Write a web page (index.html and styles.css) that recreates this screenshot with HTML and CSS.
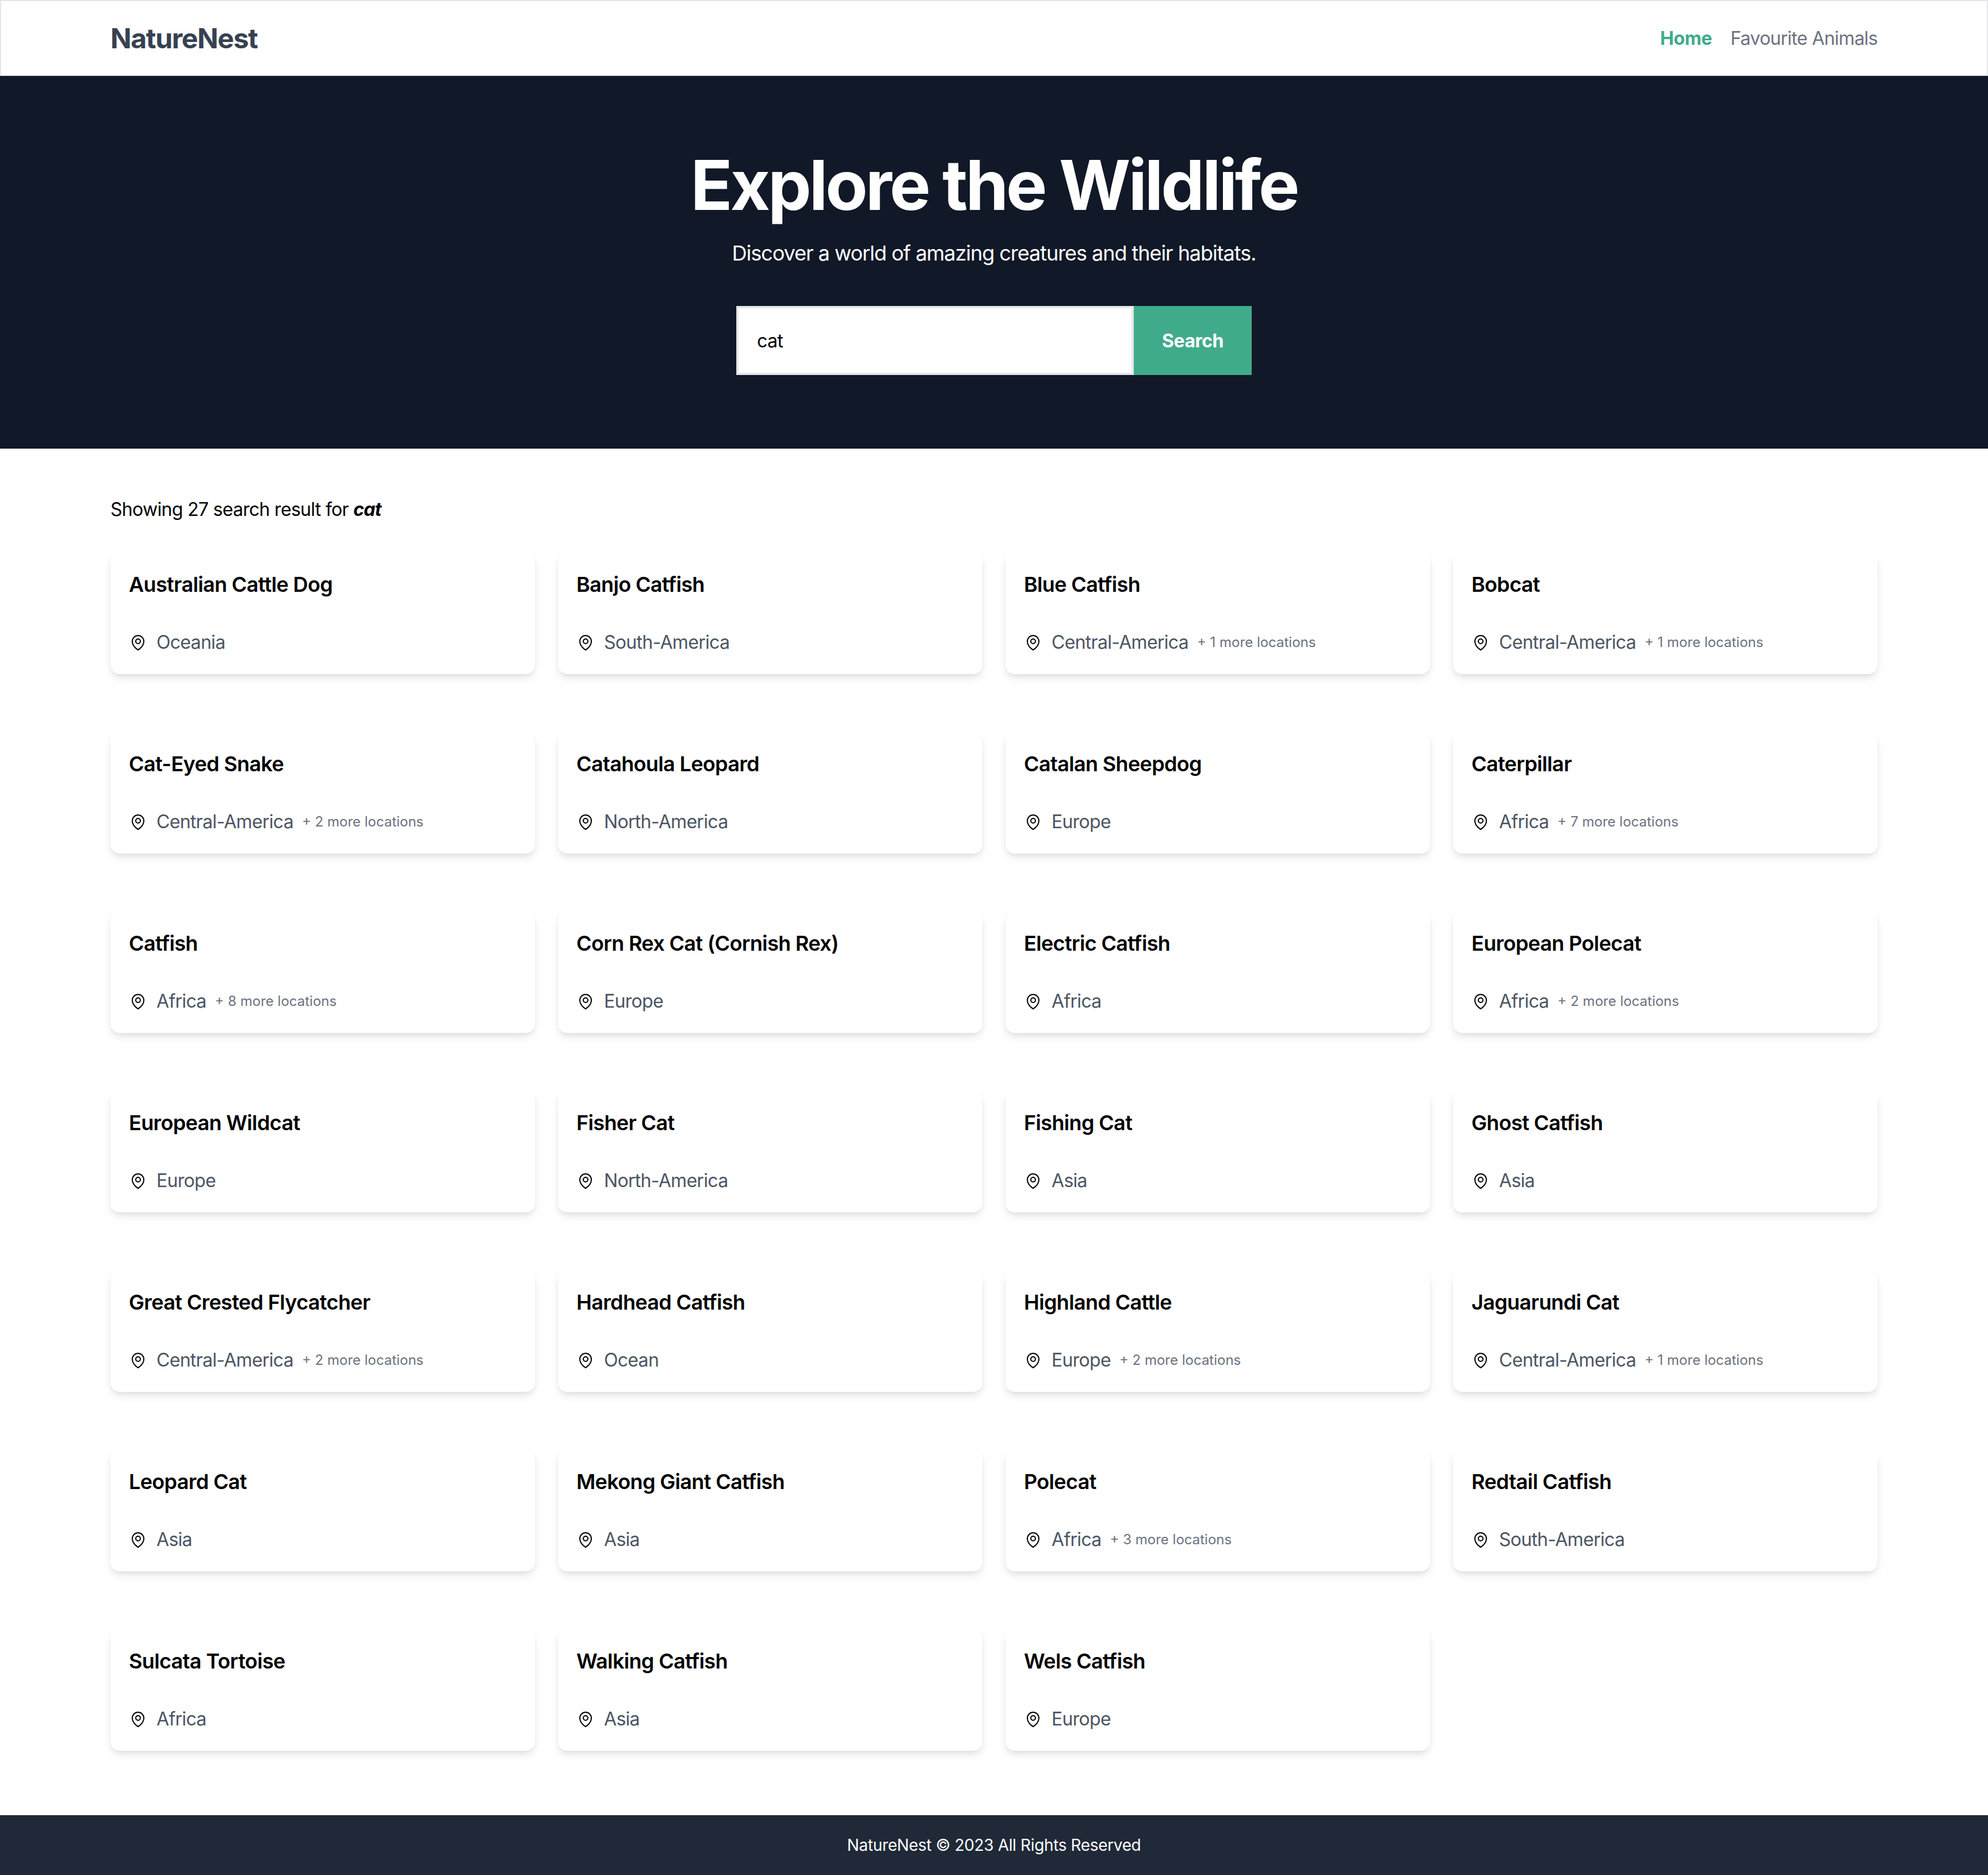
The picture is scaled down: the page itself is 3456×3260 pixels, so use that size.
FILE: index.html
```html
<!DOCTYPE html>
<html lang="en">
<head>
  <meta charset="UTF-8">
  <title>NatureNest</title>
  <meta name="viewport" content="width=device-width, initial-scale=1.0">
  <link rel="stylesheet" href="styles.css">
</head>
<body>
  <svg class="sprite" aria-hidden="true">
    <symbol id="pin" viewBox="0 0 24 24">
      <path d="M15 10.5a3 3 0 1 1-6 0 3 3 0 0 1 6 0z"/>
      <path d="M19.5 10.5c0 7.142-7.5 11.25-7.5 11.25S4.5 17.642 4.5 10.5a7.5 7.5 0 1 1 15 0z"/>
    </symbol>
  </svg>

  <header class="site-header">
    <div class="container header-row">
      <a class="logo" href="#">NatureNest</a>
      <nav class="nav">
        <a class="active" href="#">Home</a>
        <a href="#">Favourite Animals</a>
      </nav>
    </div>
  </header>

  <section class="hero">
    <h1>Explore the Wildlife</h1>
    <p>Discover a world of amazing creatures and their habitats.</p>
    <form class="search">
      <input type="text" value="cat">
      <button type="button">Search</button>
    </form>
  </section>

  <main class="container results">
    <p class="summary">Showing 27 search result for <b><i>cat</i></b></p>
    <div class="grid">
      <article class="card"><h3>Australian Cattle Dog</h3><div class="loc"><svg><use href="#pin"/></svg><span>Oceania</span></div></article>
      <article class="card"><h3>Banjo Catfish</h3><div class="loc"><svg><use href="#pin"/></svg><span>South-America</span></div></article>
      <article class="card"><h3>Blue Catfish</h3><div class="loc"><svg><use href="#pin"/></svg><span>Central-America</span><small>+ 1 more locations</small></div></article>
      <article class="card"><h3>Bobcat</h3><div class="loc"><svg><use href="#pin"/></svg><span>Central-America</span><small>+ 1 more locations</small></div></article>

      <article class="card"><h3>Cat-Eyed Snake</h3><div class="loc"><svg><use href="#pin"/></svg><span>Central-America</span><small>+ 2 more locations</small></div></article>
      <article class="card"><h3>Catahoula Leopard</h3><div class="loc"><svg><use href="#pin"/></svg><span>North-America</span></div></article>
      <article class="card"><h3>Catalan Sheepdog</h3><div class="loc"><svg><use href="#pin"/></svg><span>Europe</span></div></article>
      <article class="card"><h3>Caterpillar</h3><div class="loc"><svg><use href="#pin"/></svg><span>Africa</span><small>+ 7 more locations</small></div></article>

      <article class="card"><h3>Catfish</h3><div class="loc"><svg><use href="#pin"/></svg><span>Africa</span><small>+ 8 more locations</small></div></article>
      <article class="card"><h3>Corn Rex Cat (Cornish Rex)</h3><div class="loc"><svg><use href="#pin"/></svg><span>Europe</span></div></article>
      <article class="card"><h3>Electric Catfish</h3><div class="loc"><svg><use href="#pin"/></svg><span>Africa</span></div></article>
      <article class="card"><h3>European Polecat</h3><div class="loc"><svg><use href="#pin"/></svg><span>Africa</span><small>+ 2 more locations</small></div></article>

      <article class="card"><h3>European Wildcat</h3><div class="loc"><svg><use href="#pin"/></svg><span>Europe</span></div></article>
      <article class="card"><h3>Fisher Cat</h3><div class="loc"><svg><use href="#pin"/></svg><span>North-America</span></div></article>
      <article class="card"><h3>Fishing Cat</h3><div class="loc"><svg><use href="#pin"/></svg><span>Asia</span></div></article>
      <article class="card"><h3>Ghost Catfish</h3><div class="loc"><svg><use href="#pin"/></svg><span>Asia</span></div></article>

      <article class="card"><h3>Great Crested Flycatcher</h3><div class="loc"><svg><use href="#pin"/></svg><span>Central-America</span><small>+ 2 more locations</small></div></article>
      <article class="card"><h3>Hardhead Catfish</h3><div class="loc"><svg><use href="#pin"/></svg><span>Ocean</span></div></article>
      <article class="card"><h3>Highland Cattle</h3><div class="loc"><svg><use href="#pin"/></svg><span>Europe</span><small>+ 2 more locations</small></div></article>
      <article class="card"><h3>Jaguarundi Cat</h3><div class="loc"><svg><use href="#pin"/></svg><span>Central-America</span><small>+ 1 more locations</small></div></article>

      <article class="card"><h3>Leopard Cat</h3><div class="loc"><svg><use href="#pin"/></svg><span>Asia</span></div></article>
      <article class="card"><h3>Mekong Giant Catfish</h3><div class="loc"><svg><use href="#pin"/></svg><span>Asia</span></div></article>
      <article class="card"><h3>Polecat</h3><div class="loc"><svg><use href="#pin"/></svg><span>Africa</span><small>+ 3 more locations</small></div></article>
      <article class="card"><h3>Redtail Catfish</h3><div class="loc"><svg><use href="#pin"/></svg><span>South-America</span></div></article>

      <article class="card"><h3>Sulcata Tortoise</h3><div class="loc"><svg><use href="#pin"/></svg><span>Africa</span></div></article>
      <article class="card"><h3>Walking Catfish</h3><div class="loc"><svg><use href="#pin"/></svg><span>Asia</span></div></article>
      <article class="card"><h3>Wels Catfish</h3><div class="loc"><svg><use href="#pin"/></svg><span>Europe</span></div></article>
    </div>
  </main>

  <footer class="site-footer">NatureNest © 2023 All Rights Reserved</footer>
</body>
</html>
```

FILE: styles.css
```css
* {
  box-sizing: border-box;
}
body {
  margin: 0;
  font-family: Inter, "Liberation Sans", sans-serif;
  font-size: 32px;
  line-height: 48px;
  letter-spacing: -0.7px;
  background: #fff;
  color: #000;
}
a {
  text-decoration: none;
}
.sprite {
  display: none;
}
.container {
  width: 3072px;
  margin: 0 auto;
}

.site-header {
  height: 132px;
  border: 2px solid #e5e7eb;
}
.header-row {
  height: 100%;
  display: flex;
  align-items: center;
  justify-content: space-between;
}
.logo {
  margin-top: 2px;
  font-size: 48px;
  line-height: 64px;
  font-weight: 700;
  letter-spacing: -1.3px;
  color: #374151;
}
.nav {
  margin-top: 2px;
  display: flex;
  gap: 32px;
}
.nav a {
  color: #6b7280;
  letter-spacing: -0.75px;
}
.nav a.active {
  color: #3fab8b;
  font-weight: 700;
  letter-spacing: -0.4px;
}

.hero {
  background: #111827;
  color: #fff;
  padding: 128px 0;
  text-align: center;
}
.hero h1 {
  margin: 0 0 28px;
  font-size: 120px;
  line-height: 124px;
  font-weight: 700;
  letter-spacing: -4.05px;
}
.hero p {
  margin: 0 0 64px;
  font-size: 36px;
  line-height: 56px;
  letter-spacing: -1.05px;
}
.search {
  width: 896px;
  height: 120px;
  margin: 0 auto;
  display: flex;
}
.search input {
  flex: 1;
  min-width: 0;
  border: 4px solid #e5e7eb;
  padding: 2px 32px 0;
  font: inherit;
  letter-spacing: inherit;
  color: #000;
  background: #fff;
  outline: none;
}
.search button {
  width: 205px;
  border: 0;
  padding: 2px 0 0;
  background: #3fab8b;
  color: #fff;
  font: inherit;
  font-weight: 700;
  letter-spacing: -0.5px;
}

.results {
  padding: 82px 0 112px;
}
.summary {
  margin: 0 0 50px;
}
.grid {
  display: grid;
  grid-template-columns: repeat(4, 738px);
  column-gap: 40px;
  row-gap: 100px;
}
.card {
  height: 212px;
  padding: 31px 32px 0;
  border-radius: 16px;
  background: #fff;
  box-shadow: 0 8px 16px -2px rgba(0, 0, 0, 0.1), 0 4px 8px -2px rgba(0, 0, 0, 0.06);
}
.card h3 {
  margin: 0 0 52px;
  font-size: 36px;
  line-height: 50px;
  font-weight: 600;
  letter-spacing: -0.65px;
}
.loc {
  display: flex;
  align-items: center;
  color: #4b5563;
}
.loc svg {
  width: 32px;
  height: 32px;
  margin-right: 16px;
  flex: none;
  fill: none;
  stroke: #000;
  stroke-width: 1.5;
  stroke-linecap: round;
  stroke-linejoin: round;
}
.loc small {
  margin-left: 15px;
  font-size: 24px;
  letter-spacing: 0;
  color: #6b7280;
}

.site-footer {
  height: 104px;
  background: #1f2937;
  color: #fff;
  font-size: 28px;
  line-height: 104px;
  letter-spacing: -0.36px;
  text-align: center;
}
```
